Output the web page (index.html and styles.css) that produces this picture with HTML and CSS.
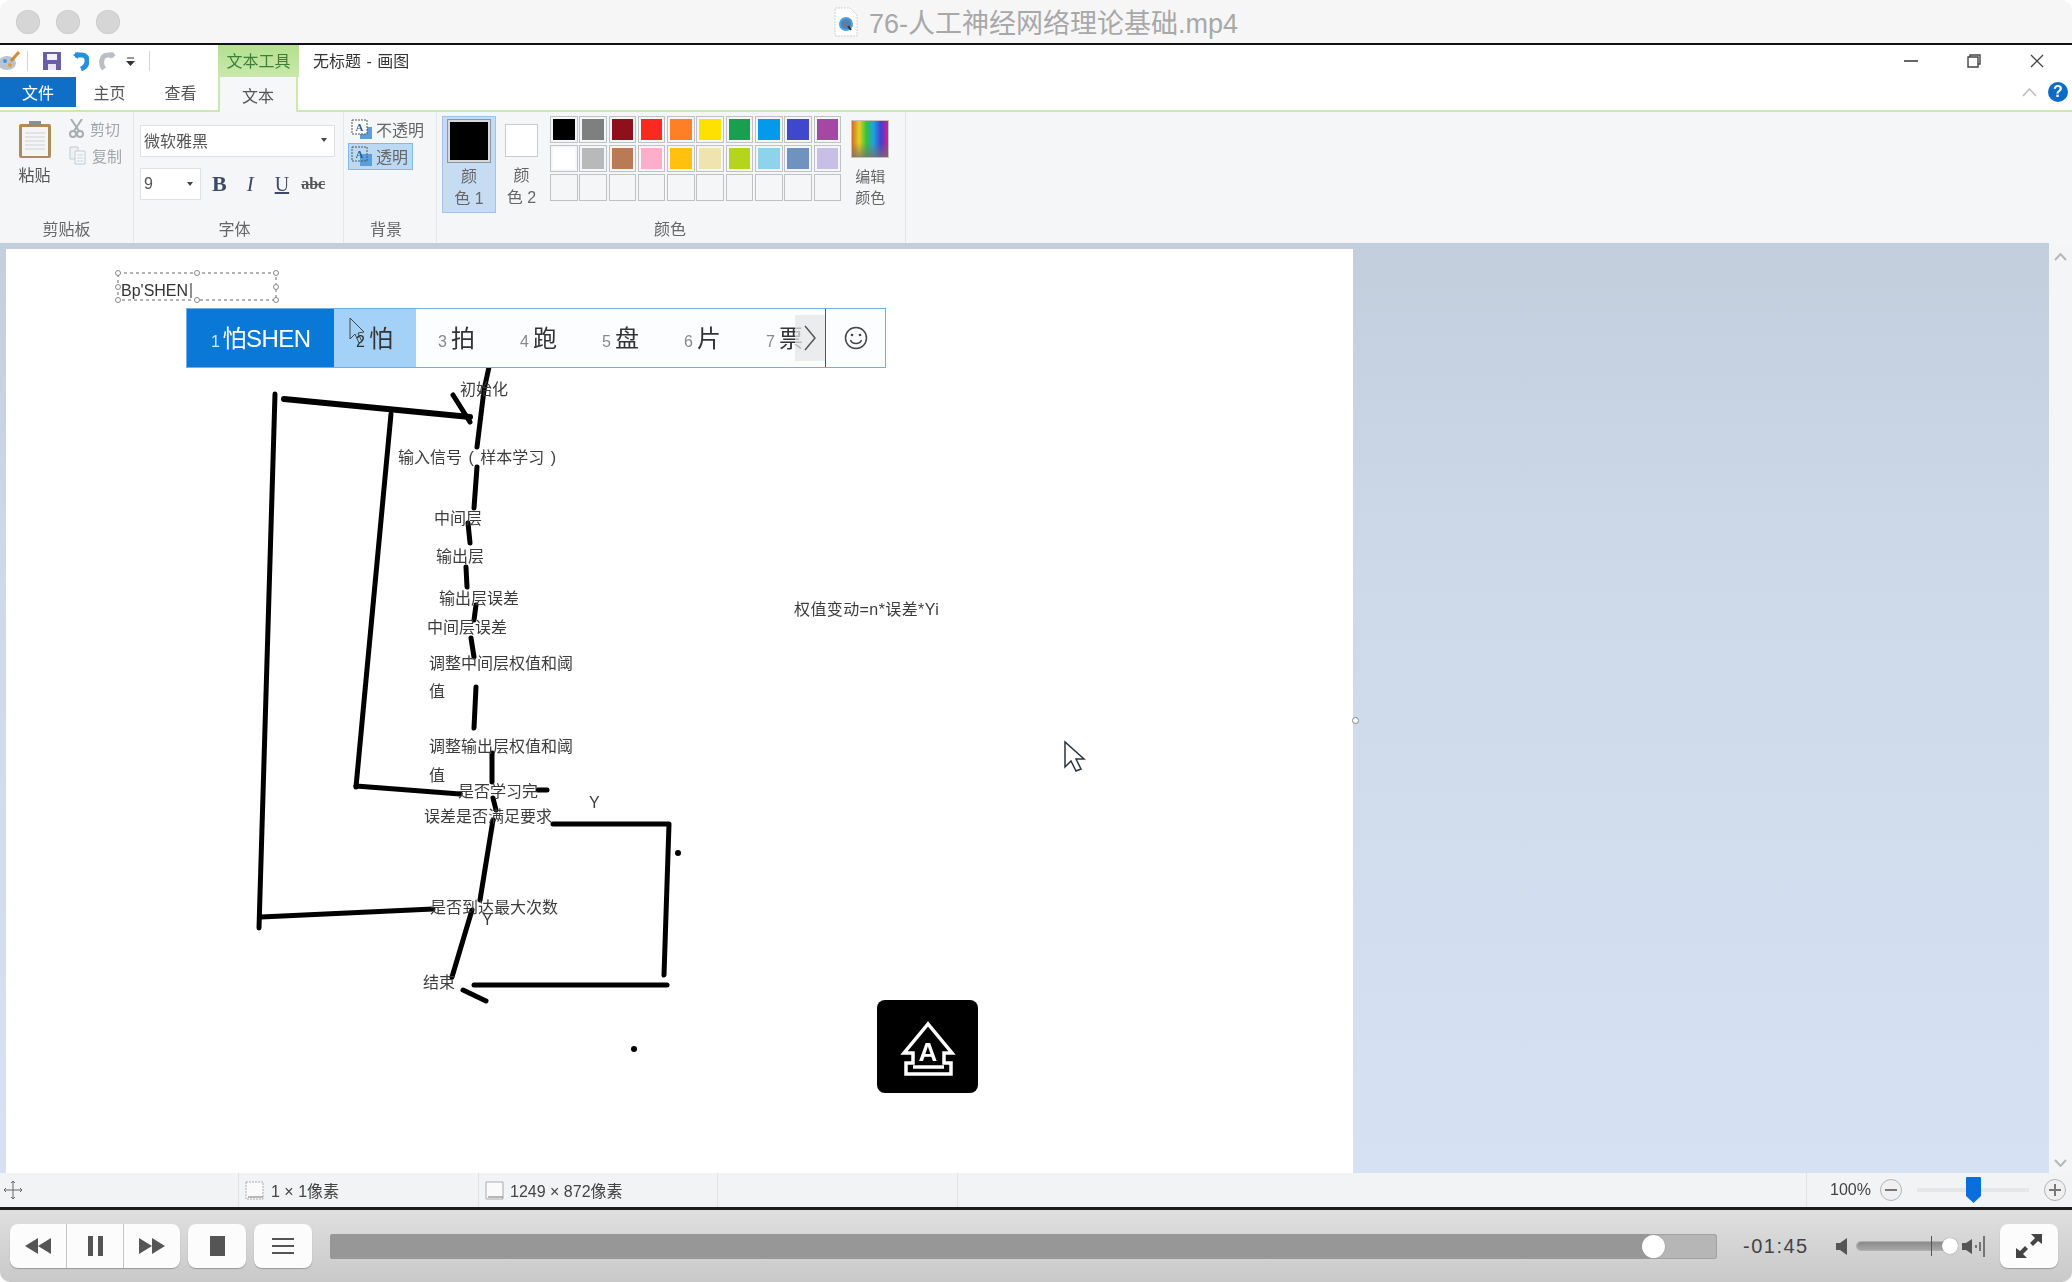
FILE: index.html
```html
<!DOCTYPE html>
<html>
<head>
	<meta charset="utf-8">
	<title>76-人工神经网络理论基础.mp4</title>
	<link rel="stylesheet" href="styles.css">
</head>
<body>
<div class="app">

	<!-- player window title -->
	<div class="mac-title">
		<div class="lights"><i></i><i></i><i></i></div>
		<div class="file-name">
			<svg width="24" height="30" viewBox="0 0 24 30"><path d="M1 1H16L23 8V29H1Z" fill="#fff" stroke="#cfcfcf" stroke-dasharray="2 1"/><circle cx="12" cy="17" r="6" fill="#5a7fa8" stroke="#4aa0e8" stroke-width="2"/><path d="M14 19l3 4" stroke="#333" stroke-width="2"/></svg>
			<span>76-人工神经网络理论基础.mp4</span>
		</div>
	</div>

	<div class="paint">

		<!-- quick access + window caption -->
		<div class="qat">
			<svg class="q-app" width="22" height="20" viewBox="0 0 22 20"><ellipse cx="8" cy="12" rx="9" ry="7" fill="#b9c4cf"/><circle cx="6" cy="10" r="2" fill="#4a90d9"/><circle cx="11" cy="14" r="2" fill="#e0a030"/><path d="M12 10L20 1" stroke="#d08a30" stroke-width="3"/></svg>
			<i class="q-sep"></i>
			<svg class="q-save" width="18" height="18" viewBox="0 0 18 18"><path d="M0 0H18V18H0Z" fill="#6a5fa6"/><path d="M4 2H14V8H4Z" fill="#f4f4fa"/><path d="M5 12H13V18H5Z" fill="#e8e6f2"/></svg>
			<svg class="q-undo" width="16" height="19" viewBox="0 0 16 19"><path d="M2 3H9C16 3 16 14 8 17" fill="none" stroke="#2390dc" stroke-width="5"/><path d="M0 3L5 0V7Z" fill="#2390dc"/></svg>
			<svg class="q-redo" width="17" height="19" viewBox="0 0 17 19"><path d="M15 3H9C2 3 1 12 5 17" fill="none" stroke="#b9bfc4" stroke-width="5"/><path d="M17 3L11 0V7Z" fill="#b9bfc4"/></svg>
			<svg class="q-drop" width="9" height="9" viewBox="0 0 9 9"><path d="M1 1H8" stroke="#333"/><path d="M0 4H9L4.500 9Z" fill="#333"/></svg>
			<i class="q-sep q-sep-2"></i>
			<div class="ctx-tab">文本工具</div>
			<div class="doc-title">无标题 - 画图</div>
			<div class="win-btns">
				<svg width="14" height="14" viewBox="0 0 14 14"><path d="M0 7H14" stroke="#333" stroke-width="1.500"/></svg>
				<svg width="14" height="14" viewBox="0 0 14 14"><path d="M3 3V1H13V10H11M1 3H11V13H1Z" fill="none" stroke="#444" stroke-width="1.400"/></svg>
				<svg width="14" height="14" viewBox="0 0 14 14"><path d="M1 1L13 13M13 1L1 13" stroke="#444" stroke-width="1.300"/></svg>
			</div>
		</div>

		<!-- ribbon tabs -->
		<div class="tabs">
			<div class="tab tab-file">文件</div>
			<div class="tab tab-home">主页</div>
			<div class="tab tab-view">查看</div>
			<div class="tab tab-text">文本</div>
			<svg class="collapse" width="15" height="9" viewBox="0 0 15 9"><path d="M1 8L7.500 1L14 8" fill="none" stroke="#bbb" stroke-width="1.500"/></svg>
			<div class="help">?</div>
		</div>

		<div class="ribbon">

			<div class="group g-clip">
				<div class="g-body">
					<div class="paste">
						<svg width="34" height="38" viewBox="0 0 34 38"><rect x="1" y="3" width="32" height="34" rx="2" fill="#b08a58"/><rect x="4" y="6" width="26" height="29" fill="#f5f5f5"/><path d="M7 12H27M7 16H27M7 20H27M7 24H27M7 28H27" stroke="#ccd0d6"/><rect x="11" y="0" width="12" height="5" fill="#8d8d8d"/></svg>
						<span>粘贴</span>
					</div>
					<div class="clip-small">
						<div class="clip-row">
							<svg width="15" height="19" viewBox="0 0 15 19"><path d="M2 0L10 12M13 0L5 12" stroke="#a9acb0" stroke-width="2"/><circle cx="4" cy="15" r="3" fill="none" stroke="#a9acb0" stroke-width="2"/><circle cx="11" cy="15" r="3" fill="none" stroke="#a9acb0" stroke-width="2"/></svg>
							<span>剪切</span>
						</div>
						<div class="clip-row">
							<svg width="17" height="19" viewBox="0 0 17 19"><path d="M1 1H9V13H1Z" fill="#eef1f4" stroke="#c4cad0"/><path d="M6 5H16V18H6Z" fill="#f6f7f9" stroke="#c4cad0"/><path d="M8 9H14M8 12H14M8 15H14" stroke="#cfd4d9"/></svg>
							<span>复制</span>
						</div>
					</div>
				</div>
				<div class="g-label">剪贴板</div>
			</div>

			<div class="group g-font">
				<div class="g-body g-col">
					<div class="combo combo-name"><span>微软雅黑</span><i class="caret"></i></div>
					<div class="font-row">
						<div class="combo combo-size"><span>9</span><i class="caret"></i></div>
						<b class="fmt fmt-b">B</b>
						<i class="fmt fmt-i">I</i>
						<u class="fmt fmt-u">U</u>
						<s class="fmt fmt-s">abc</s>
					</div>
				</div>
				<div class="g-label">字体</div>
			</div>

			<div class="group g-back">
				<div class="g-body g-col">
					<div class="back-row">
						<svg width="21" height="20" viewBox="0 0 21 20"><rect x="9" y="8" width="12" height="12" fill="#5a9fdc"/><rect x="1" y="1" width="15" height="14" fill="#fff" stroke="#555" stroke-dasharray="2 1"/><text class="icon-a" x="4.500" y="12">A</text></svg>
						<span>不透明</span>
					</div>
					<div class="back-row on">
						<svg width="21" height="20" viewBox="0 0 21 20"><rect x="9" y="8" width="12" height="12" fill="#5a9fdc"/><rect x="1" y="1" width="15" height="14" fill="none" stroke="#555" stroke-dasharray="2 1"/><text class="icon-a" x="4.500" y="12">A</text></svg>
						<span>透明</span>
					</div>
				</div>
				<div class="g-label">背景</div>
			</div>

			<div class="group g-color">
				<div class="g-body">
					<div class="col-pick col-1">
						<div class="big-swatch"><i></i></div>
						<span>颜</span>
						<span>色 1</span>
					</div>
					<div class="col-pick col-2">
						<div class="big-swatch-2"></div>
						<span>颜</span>
						<span>色 2</span>
					</div>
					<div class="palette">
						<i class="sw c-black"></i><i class="sw c-gray"></i><i class="sw c-maroon"></i><i class="sw c-red"></i><i class="sw c-orange"></i><i class="sw c-yellow"></i><i class="sw c-green"></i><i class="sw c-blue"></i><i class="sw c-indigo"></i><i class="sw c-purple"></i>
						<i class="sw c-white"></i><i class="sw c-silver"></i><i class="sw c-brown"></i><i class="sw c-pink"></i><i class="sw c-gold"></i><i class="sw c-cream"></i><i class="sw c-lime"></i><i class="sw c-sky"></i><i class="sw c-steel"></i><i class="sw c-lilac"></i>
						<i class="sw"></i><i class="sw"></i><i class="sw"></i><i class="sw"></i><i class="sw"></i><i class="sw"></i><i class="sw"></i><i class="sw"></i><i class="sw"></i><i class="sw"></i>
					</div>
					<div class="edit-col">
						<div class="rainbow"></div>
						<span>编辑</span>
						<span>颜色</span>
					</div>
				</div>
				<div class="g-label">颜色</div>
			</div>
		</div>

		<!-- drawing area -->
		<div class="workspace">
			<div class="canvas-wrap">
				<div class="canvas">
					<svg class="drawing" width="1347" height="924" viewBox="6 249 1347 924">
						<g class="ink">
							<path class="w5" d="M275 394L259 928"/>
							<path class="w5" d="M261 917L433 909"/>
							<path class="w6" d="M284 399L470 417"/>
							<path class="w5" d="M453 395L470 422"/>
							<path class="w5" d="M391 414L366 680L356 787"/>
							<path class="w5" d="M356 786L460 794"/>
							<path class="w5" d="M538 790L547 790"/>
							<path class="w5" d="M489 367L484 390L477 447"/>
							<path class="w5" d="M477 467L474 508"/>
							<path class="w5" d="M468 523L470 543"/>
							<path class="w5" d="M466 567L467 587"/>
							<path class="w5" d="M476 605L474 620"/>
							<path class="w5" d="M471 638L474 657"/>
							<path class="w5" d="M476 687L474 728"/>
							<path class="w5" d="M492 753L492 782"/>
							<path class="w5" d="M493 798L496 810"/>
							<path class="w5" d="M493 820L480 900"/>
							<path class="w5" d="M472 910L452 977"/>
							<path class="w5" d="M553 824L669 824L664 975"/>
							<path class="w5" d="M474 985L667 985"/>
							<path class="w5" d="M463 990L486 1001"/>
						</g>
						<circle cx="678" cy="853" r="3"/>
						<circle cx="634" cy="1049" r="3"/>

						<g class="lbl">
							<text x="460" y="395">初始化</text>
							<text class="lbl-paren" x="398" y="463">输入信号 ( 样本学习 )</text>
							<text x="434" y="524">中间层</text>
							<text x="436" y="562">输出层</text>
							<text x="439" y="604">输出层误差</text>
							<text x="427" y="633">中间层误差</text>
							<text x="429" y="669">调整中间层权值和阈</text>
							<text x="429" y="697">值</text>
							<text x="429" y="752">调整输出层权值和阈</text>
							<text x="429" y="781">值</text>
							<text x="458" y="797">是否学习完</text>
							<text x="424" y="822">误差是否满足要求</text>
							<text x="589" y="808">Y</text>
							<text x="430" y="913">是否到达最大次数</text>
							<text x="482" y="925">Y</text>
							<text x="423" y="988">结束</text>
							<text class="lbl-wide" x="794" y="615">权值变动=n*误差*Yi</text>
						</g>

						<!-- text being typed -->
						<rect class="tbox" x="118" y="273" width="158" height="27"/>
						<g class="handle">
							<circle cx="118" cy="273" r="2.500"/><circle cx="197" cy="273" r="2.500"/><circle cx="276" cy="273" r="2.500"/>
							<circle cx="118" cy="287" r="2.500"/><circle cx="276" cy="287" r="2.500"/>
							<circle cx="118" cy="300" r="2.500"/><circle cx="197" cy="300" r="2.500"/><circle cx="276" cy="300" r="2.500"/>
						</g>
						<text class="typed" x="121" y="296">Bp'SHEN</text>
						<path class="caret-line" d="M191 283V298"/>

						<!-- watermark -->
						<rect x="877" y="1000" width="101" height="93" rx="8"/>
						<path class="logo-line" d="M906 1063V1074H951V1063H944V1053H952L928 1024L904 1053H913V1063Z"/>
						<path class="logo-line" d="M913 1067H944"/>
						<text class="logo-a" x="928" y="1061">A</text>

						<path class="cursor" d="M1065 742V767L1071 761L1076 771L1081 769L1076 759L1084 759Z"/>
					</svg>

					<div class="cand">
						<div class="cand-list">
							<div class="cand-item first"><em>1</em>怕SHEN</div>
							<div class="cand-item second"><em>2</em>怕</div>
							<div class="cand-item"><em>3</em>拍</div>
							<div class="cand-item"><em>4</em>跑</div>
							<div class="cand-item"><em>5</em>盘</div>
							<div class="cand-item"><em>6</em>片</div>
							<div class="cand-item"><em>7</em>票</div>
						</div>
						<div class="cand-next">
							<svg width="14" height="26" viewBox="0 0 14 26"><path d="M2 1L12 13L2 25" fill="none" stroke="#555" stroke-width="1.500"/></svg>
						</div>
						<div class="cand-smile">
							<svg width="24" height="24" viewBox="0 0 24 24"><circle cx="12" cy="12" r="10.500" fill="none" stroke="#444" stroke-width="1.500"/><circle cx="8" cy="9" r="1.300" fill="#444"/><circle cx="16" cy="9" r="1.300" fill="#444"/><path d="M6.500 14C8 18.500 16 18.500 17.500 14" fill="none" stroke="#444" stroke-width="1.500"/></svg>
						</div>
						<svg class="cand-cursor" width="16" height="28" viewBox="0 0 16 28"><path d="M1 1V22L6 17L10 26L13 25L9 16L15 15Z" fill="none" stroke="#444"/></svg>
					</div>
					<i class="canvas-grip"></i>
				</div>
			</div>
			<div class="vscroll">
				<svg width="13" height="8" viewBox="0 0 13 8"><path d="M1 7L6.500 1L12 7" fill="none" stroke="#b5b8bc" stroke-width="2"/></svg>
				<svg width="13" height="8" viewBox="0 0 13 8"><path d="M1 1L6.500 7L12 1" fill="none" stroke="#b5b8bc" stroke-width="2"/></svg>
			</div>
		</div>

		<div class="status">
			<div class="st st-move">
				<svg width="18" height="18" viewBox="0 0 18 18"><path d="M9 0V18M0 9H18M7 2L9 0L11 2M7 16L9 18L11 16M2 7L0 9L2 11M16 7L18 9L16 11" fill="none" stroke="#666"/></svg>
			</div>
			<div class="st st-sel">
				<svg width="19" height="19" viewBox="0 0 19 19"><path d="M1 1H18V18H1Z" fill="#fafafa" stroke="#aaa" stroke-dasharray="2 1"/><path d="M3 16H18" stroke="#777"/></svg>
				<span>1 × 1像素</span>
			</div>
			<div class="st st-size">
				<svg width="19" height="19" viewBox="0 0 19 19"><path d="M1 1H18V18H1Z" fill="#fafafa" stroke="#aaa"/><path d="M3 16H18" stroke="#777"/></svg>
				<span>1249 × 872像素</span>
			</div>
			<div class="st st-empty"></div>
			<div class="st st-empty-2"></div>
			<div class="st st-zoom">
				<span>100%</span>
				<div class="zoom-btn zoom-minus"><i class="h"></i></div>
				<div class="zoom-track"><svg class="zoom-thumb" width="15" height="26" viewBox="0 0 15 26"><path d="M0 1Q0 0 1 0H14Q15 0 15 1V19L7.500 26L0 19Z" fill="#0b6fdb"/></svg></div>
				<div class="zoom-btn"><i class="h"></i><i class="v"></i></div>
			</div>
		</div>
	</div>

	<!-- player controls -->
	<div class="player">
		<div class="btn-wrap triple">
			<div class="pbtn"><svg width="26" height="16" viewBox="0 0 26 16"><path d="M13 0V16L0 8ZM26 0V16L13 8Z" fill="#555"/></svg></div>
			<div class="pbtn"><svg width="15" height="20" viewBox="0 0 15 20"><path d="M0 0H5V20H0ZM10 0H15V20H10Z" fill="#555"/></svg></div>
			<div class="pbtn"><svg width="26" height="16" viewBox="0 0 26 16"><path d="M0 0V16L13 8ZM13 0V16L26 8Z" fill="#555"/></svg></div>
		</div>
		<div class="btn-wrap single">
			<div class="pbtn"><svg width="15" height="20" viewBox="0 0 15 20"><path d="M0 0H15V20H0Z" fill="#555"/></svg></div>
		</div>
		<div class="btn-wrap single">
			<div class="pbtn"><svg width="22" height="16" viewBox="0 0 22 16"><path d="M0 1H22M0 8H22M0 15H22" stroke="#555" stroke-width="2"/></svg></div>
		</div>
		<div class="progress"><div class="progress-fill"></div><i class="progress-knob"></i></div>
		<div class="time">-01:45</div>
		<svg class="vol-low" width="11" height="17" viewBox="0 0 11 17"><path d="M0 5H4L11 0V17L4 12H0Z" fill="#555"/></svg>
		<div class="vol"><i class="vol-tick"></i><i class="vol-knob"></i></div>
		<svg class="vol-high" width="23" height="21" viewBox="0 0 23 21"><path d="M0 7H4L10 3V18L4 14H0Z" fill="#555"/><path d="M14 9V12M18 6V15M22 0V21" stroke="#555" stroke-width="1.500"/></svg>
		<div class="btn-wrap full">
			<div class="pbtn"><svg width="26" height="24" viewBox="0 0 26 24"><path d="M15 0H26V10L22 7L17 12L14 9L19 4ZM0 24V14L4 17L9 12L12 15L7 20L11 24Z" fill="#444"/></svg></div>
		</div>
	</div>
</div>
</body>
</html>
```
FILE: styles.css
```css
html, body {
	margin: 0;
	background: #fff;
}
body {
	font-family: "Liberation Sans", "Noto Sans CJK SC", sans-serif;
	color: #444;
}
.app {
	width: 2072px;
	height: 1282px;
	display: flex;
	flex-direction: column;
	overflow: hidden;
}

/* title bar */
.mac-title {
	height: 43px;
	flex: none;
	display: grid;
	grid-template-columns: 1fr auto 1fr;
	align-items: center;
	background: #f6f6f6;
	border-radius: 10px 10px 0 0;
	border-bottom: 2px solid #111;
}
.lights {
	display: flex;
	gap: 16px;
	padding-left: 16px;
}
.lights i {
	width: 24px;
	height: 24px;
	border-radius: 50%;
	background: #d6d6d6;
	box-shadow: inset 0 0 0 1px #cfcfcf;
}
.file-name {
	display: flex;
	align-items: center;
	gap: 11px;
	font-size: 27px;
	color: #a8a8a8;
}

.paint {
	flex: 1;
	min-height: 0;
	display: flex;
	flex-direction: column;
	filter: blur(0.5px);
}

/* quick access */
.qat {
	height: 32px;
	flex: none;
	display: flex;
	align-items: center;
	background: #fff;
}
.q-app { margin-left: -1px; }
.q-sep {
	width: 1px;
	height: 20px;
	margin-left: 6px;
	background: #d5d5d5;
}
.q-sep-2 { margin-left: 14px; }
.q-save { margin-left: 15px; }
.q-undo { margin-left: 12px; }
.q-redo { margin-left: 10px; }
.q-drop { margin-left: 10px; }
.ctx-tab {
	box-sizing: border-box;
	width: 81px;
	height: 32px;
	margin-left: 68px;
	padding-bottom: 3px;
	display: flex;
	align-items: center;
	justify-content: center;
	font-size: 16px;
	background: linear-gradient(#b4e08e, #c9e9ab);
	color: #3b7f3b;
}
.doc-title {
	margin: 0 0 3px 14px;
	font-size: 16px;
	word-spacing: 1px;
	color: #333;
}
.win-btns {
	margin-left: auto;
	display: flex;
	gap: 49px;
	padding-right: 28px;
	padding-top: 0;
}

/* tabs */
.tabs {
	height: 33px;
	flex: none;
	display: flex;
	align-items: flex-start;
	background: #fff;
	border-bottom: 2px solid #c9e9ae;
	position: relative;
}
.tab {
	height: 30px;
	display: flex;
	align-items: center;
	justify-content: center;
	font-size: 16px;
	color: #555;
}
.tab-file {
	width: 76px;
	background: #0f6fc6;
	color: #fff;
}
.tab-home { width: 67px; }
.tab-view { width: 75px; }
.tab-text {
	width: 80px;
	height: 35px;
	box-sizing: border-box;
	border: solid #c9e9ae;
	border-width: 0 2px;
	background: #f5f7f8;
	margin-bottom: -2px;
	z-index: 1;
}
.collapse {
	margin: 11px 0 0 auto;
}
.help {
	width: 20px;
	height: 20px;
	margin: 5px 4px 0 11px;
	border-radius: 50%;
	background: #0a6cc4;
	color: #fff;
	font-size: 16px;
	font-weight: bold;
	line-height: 20px;
	text-align: center;
}

/* ribbon */
.ribbon {
	height: 131px;
	flex: none;
	display: flex;
	background: #f4f6f7;
}
.group {
	display: flex;
	flex-direction: column;
	box-sizing: border-box;
	border-right: 1px solid #e4e6e8;
}
.g-body {
	flex: 1;
	display: flex;
	min-height: 0;
}
.g-col { flex-direction: column; }
.g-label {
	height: 28px;
	flex: none;
	font-size: 16px;
	line-height: 29px;
	text-align: center;
	color: #666;
}
.g-clip { width: 134px; }
.g-font { width: 210px; }
.g-back { width: 93px; }
.g-color { width: 469px; }
.g-font .g-label,
.g-back .g-label { padding-right: 8px; }
.g-color .g-label { padding-right: 2px; }

.paste {
	width: 33px;
	margin: 9px 0 0 18px;
	display: flex;
	flex-direction: column;
	align-items: center;
	font-size: 16px;
	color: #555;
}
.paste span {
	margin-top: 3px;
	white-space: nowrap;
}
.clip-small {
	margin: 6px 0 0 18px;
	display: flex;
	flex-direction: column;
	gap: 7px;
}
.clip-row {
	height: 20px;
	display: flex;
	align-items: center;
	gap: 6px;
	font-size: 15px;
	color: #a2a5a9;
	white-space: nowrap;
}

.g-font .g-body { padding: 13px 0 0 6px; }
.combo {
	box-sizing: border-box;
	height: 32px;
	display: flex;
	align-items: center;
	justify-content: space-between;
	padding: 0 7px 0 3px;
	background: #fff;
	border: 1px solid #dfe1e3;
	font-size: 16px;
	color: #555;
}
.combo-name {
	width: 195px;
	padding-bottom: 3px;
}
.combo-size { width: 61px; }
.caret {
	width: 0;
	height: 0;
	border: 3px solid transparent;
	border-top: 4px solid #444;
	border-bottom: 0;
}
.font-row {
	margin-top: 11px;
	display: flex;
	align-items: center;
	height: 32px;
}
.fmt {
	font-family: "Liberation Serif", serif;
	color: #3d4a66;
}
.fmt-b {
	margin-left: 11px;
	font-size: 22px;
}
.fmt-i {
	margin-left: 20px;
	font-size: 21px;
}
.fmt-u {
	margin-left: 21px;
	font-size: 20px;
}
.fmt-s {
	margin-left: 12px;
	font-size: 16px;
	font-weight: bold;
	color: #555;
}

.g-back .g-body {
	padding: 3px 0 0 4px;
}
.back-row {
	box-sizing: border-box;
	height: 27px;
	width: 80px;
	display: flex;
	align-items: center;
	gap: 4px;
	padding-left: 3px;
	font-size: 16px;
	color: #666;
	white-space: nowrap;
}
.back-row.on {
	width: 65px;
	margin-top: 1px;
	background: #bcd9f3;
	border: 1px solid #8ab8e2;
	padding-left: 2px;
	padding-bottom: 1px;
}
.icon-a {
	font-family: "Liberation Serif", serif;
	font-size: 11px;
	font-weight: bold;
	fill: #2b5f96;
}

.g-color .g-body { padding: 4px 0 0 5px; }
.col-pick {
	display: flex;
	flex-direction: column;
	align-items: center;
	font-size: 16px;
	line-height: 22px;
	color: #666;
}
.col-pick span { white-space: nowrap; }
.col-1 {
	box-sizing: border-box;
	width: 54px;
	height: 97px;
	background: #c6dcf2;
	border: 1px solid #a0c4e8;
	padding-top: 2px;
}
.big-swatch {
	box-sizing: border-box;
	width: 44px;
	height: 44px;
	margin-bottom: 3px;
	padding: 2px;
	background: #d5d9dd;
	border: 1px solid #8f9398;
}
.big-swatch i {
	display: block;
	height: 100%;
	background: #000;
}
.col-2 {
	width: 33px;
	margin-left: 9px;
	padding-top: 8px;
}
.big-swatch-2 {
	box-sizing: border-box;
	width: 33px;
	height: 33px;
	margin-bottom: 8px;
	background: #fff;
	border: 1px solid #c8cacc;
}
.palette {
	margin: 0 0 0 12px;
	display: grid;
	grid-template-columns: repeat(10, 27.5px);
	grid-auto-rows: 27px;
	gap: 2.200px 1.800px;
	align-content: start;
}
.sw {
	display: block;
	box-sizing: border-box;
	border: 1px solid #bfc1c4;
	padding: 2px;
	background-clip: content-box;
}
.c-black { background-color: #000; }
.c-gray { background-color: #7f7f7f; }
.c-maroon { background-color: #8f0f1a; }
.c-red { background-color: #fa2a1e; }
.c-orange { background-color: #ff7f27; }
.c-yellow { background-color: #ffe000; }
.c-green { background-color: #1a9e50; }
.c-blue { background-color: #0499ea; }
.c-indigo { background-color: #3f48cc; }
.c-purple { background-color: #a349a4; }
.c-white { background-color: #fff; }
.c-silver { background-color: #b9b9b9; }
.c-brown { background-color: #b97a57; }
.c-pink { background-color: #ffaec9; }
.c-gold { background-color: #ffc10e; }
.c-cream { background-color: #efe4b0; }
.c-lime { background-color: #b5d51d; }
.c-sky { background-color: #8fd2ec; }
.c-steel { background-color: #7092be; }
.c-lilac { background-color: #c8bfe7; }
.edit-col {
	width: 38px;
	margin-left: 10px;
	padding-top: 4px;
	display: flex;
	flex-direction: column;
	align-items: center;
	font-size: 15px;
	line-height: 21px;
	color: #666;
	white-space: nowrap;
}
.rainbow {
	box-sizing: border-box;
	width: 38px;
	height: 38px;
	margin-bottom: 8px;
	border: 1px solid #c5c0bb;
	background: linear-gradient(transparent 60%, rgba(120,110,110,.75)), linear-gradient(90deg, #c9702c, #e8d020, #35c040, #20a0e0, #4040d0, #d02090);
}

/* drawing area */
.workspace {
	flex: 1;
	min-height: 0;
	display: flex;
	background: linear-gradient(#c3cedd, #cdd8e8 35%, #d6e2f3);
}
.canvas-wrap {
	flex: 1;
	padding: 6px 0 0 6px;
	min-width: 0;
}
.canvas {
	width: 1347px;
	height: 100%;
	background: #fff;
	position: relative;
	overflow: visible;
}
.drawing {
	display: block;
	height: 100%;
	overflow: hidden;
}
.ink path {
	fill: none;
	stroke: #000;
	stroke-linecap: round;
	stroke-linejoin: round;
}
.w5 { stroke-width: 5; }
.w6 { stroke-width: 6; }
.lbl text {
	font-size: 16px;
	fill: #3c3c3c;
}
.lbl .lbl-paren { word-spacing: 2px; }
.lbl .lbl-wide { letter-spacing: 0.400px; }
.tbox {
	fill: none;
	stroke: #666;
	stroke-dasharray: 3 3;
}
.handle circle {
	fill: #fff;
	stroke: #888;
}
.typed {
	font-size: 16px;
	fill: #333;
}
.caret-line {
	stroke: #222;
}
.logo-line {
	fill: none;
	stroke: #fff;
	stroke-width: 3.500;
}
.logo-a {
	font-size: 26px;
	font-weight: bold;
	fill: #fff;
	text-anchor: middle;
}
.cursor {
	fill: #fff;
	stroke: #2c3340;
	stroke-width: 1.500;
}
.cand {
	position: absolute;
	left: 180px;
	top: 59px;
	box-sizing: border-box;
	width: 700px;
	height: 60px;
	display: flex;
	background: #fbfdff;
	border: 1px solid #6cb0e6;
}
.cand-list {
	flex: 1;
	min-width: 0;
	display: flex;
	overflow: hidden;
}
.cand-item {
	flex: none;
	width: 82px;
	box-sizing: border-box;
	padding: 12px 0 0 22px;
	font-size: 24px;
	line-height: 36px;
	color: #333;
	white-space: nowrap;
}
.cand-item em {
	margin-right: 4px;
	font-size: 16px;
	font-style: normal;
	color: #888;
}
.cand-item.first {
	width: 147px;
	padding-left: 24px;
	background: #0a78d7;
	color: #fff;
	letter-spacing: -0.500px;
}
.cand-item.first em { color: #cfe6fa; margin-right: 3px; }
.cand-item.second { background: #a4d1f8; }
.cand-item.second em { color: #333; }
.cand-next {
	position: absolute;
	right: 60px;
	top: 6px;
	width: 30px;
	height: 46px;
	display: flex;
	align-items: center;
	justify-content: center;
	background: rgba(228, 230, 232, 0.75);
}
.cand-smile {
	flex: none;
	width: 60px;
	display: flex;
	align-items: center;
	justify-content: center;
	border-left: 1px solid #555;
	box-sizing: border-box;
}
.cand-cursor {
	position: absolute;
	left: 162px;
	top: 8px;
}
.canvas-grip {
	position: absolute;
	right: -6px;
	top: 468px;
	width: 5px;
	height: 5px;
	border-radius: 50%;
	background: #fff;
	border: 1px solid #888;
}
.vscroll {
	width: 23px;
	flex: none;
	display: flex;
	flex-direction: column;
	align-items: center;
	justify-content: space-between;
	padding: 10px 0 6px;
	box-sizing: border-box;
	background: #f4f5f6;
}

/* status bar */
.status {
	height: 34px;
	flex: none;
	display: flex;
	background: #f2f3f4;
	font-size: 16px;
	color: #444;
}
.st {
	box-sizing: border-box;
	display: flex;
	align-items: center;
	border-right: 1px solid #e2e3e5;
	white-space: nowrap;
}
.st-move {
	width: 239px;
	padding-left: 4px;
}
.st-sel {
	width: 240px;
	padding-left: 6px;
	gap: 7px;
}
.st-size {
	width: 239px;
	padding-left: 6px;
	gap: 6px;
}
.st-empty { width: 240px; }
.st-empty-2 { width: 849px; }
.st-zoom {
	flex: 1;
	border-right: 0;
	padding-left: 23px;
}
.zoom-btn {
	box-sizing: border-box;
	width: 22px;
	height: 22px;
	border-radius: 50%;
	border: 1px solid #b5b5b5;
	background: #f0f0f0;
	position: relative;
}
.zoom-minus { margin-left: 9px; }
.zoom-btn i {
	position: absolute;
	background: #777;
}
.zoom-btn .h {
	left: 4px;
	right: 4px;
	top: 9px;
	height: 2px;
}
.zoom-btn .v {
	top: 4px;
	bottom: 4px;
	left: 9px;
	width: 2px;
}
.zoom-track {
	width: 112px;
	height: 4px;
	margin: 0 15px;
	background: #e6e7e8;
	position: relative;
}
.zoom-thumb {
	position: absolute;
	left: 49px;
	top: -11px;
}

/* player */
.player {
	height: 75px;
	flex: none;
	box-sizing: border-box;
	border-top: 3px solid #1c1c1c;
	display: flex;
	align-items: center;
	padding: 0 14px 0 10px;
	background: linear-gradient(#dfdfdf, #c9c9c9);
	border-radius: 0 0 10px 10px;
}
.btn-wrap {
	height: 44px;
	flex: none;
	display: flex;
	background: #fcfcfc;
	border-radius: 8px;
	box-shadow: 0 1px 1px #9a9a9a;
}
.triple { width: 170px; }
.single {
	width: 58px;
	margin-left: 8px;
}
.pbtn {
	flex: 1;
	display: flex;
	align-items: center;
	justify-content: center;
	border-left: 1px solid #c4c4c4;
}
.pbtn:first-child { border-left: 0; }
.progress {
	flex: 1;
	height: 25px;
	margin-left: 18px;
	background: #b6b6b6;
	border-radius: 3px;
	box-shadow: inset 0 0 0 1px #a2a2a2;
	position: relative;
}
.progress-fill {
	width: 95.200%;
	height: 100%;
	background: #979797;
	border-radius: 3px 0 0 3px;
}
.progress-knob {
	position: absolute;
	left: 1312px;
	top: 1px;
	width: 23px;
	height: 23px;
	border-radius: 50%;
	background: #fff;
	box-shadow: 0 0 1px #777;
}
.time {
	width: 66px;
	margin-left: 26px;
	font-size: 20px;
	letter-spacing: 1.500px;
	color: #444;
	white-space: nowrap;
}
.vol-low { margin-left: 27px; }
.vol {
	width: 100px;
	height: 8px;
	margin-left: 10px;
	background: linear-gradient(#8a8a8a, #a6a6a6);
	border-radius: 4px;
	box-shadow: 0 0 0 1px #b0b0b0;
	position: relative;
}
.vol-tick {
	position: absolute;
	left: 74px;
	top: -6px;
	width: 1px;
	height: 20px;
	background: #555;
}
.vol-knob {
	position: absolute;
	left: 85px;
	top: -4px;
	width: 16px;
	height: 16px;
	border-radius: 50%;
	background: #fff;
	box-shadow: 0 0 1px #666;
}
.vol-high { margin-left: 5px; }
.full {
	width: 58px;
	margin-left: 15px;
}
```
